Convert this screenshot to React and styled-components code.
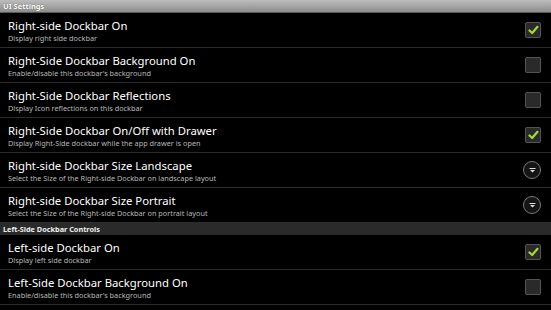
import React from 'react';
import styled, { createGlobalStyle } from 'styled-components';

const Global = createGlobalStyle`
  html, body {
    margin: 0;
    padding: 0;
    background: #000;
  }
  body {
    font-family: "Noto Sans", "Open Sans", sans-serif;
    color: #fff;
    width: 551px;
    height: 310px;
    overflow: hidden;
  }
`;

const Screen = styled.div`
  width: 551px;
  height: 310px;
  background: #000;
  display: flex;
  flex-direction: column;
`;

const TitleBar = styled.div`
  height: 13px;
  flex: none;
  box-sizing: border-box;
  background: linear-gradient(#bcbcbc, #8e8e8e);
  border-bottom: 1px solid #5a5a5a;
  display: flex;
  align-items: center;
  padding-left: 3px;
  font-size: 7.5px;
  font-weight: bold;
  color: #fff;
  text-shadow: 0 0 1px #444;
`;

const Category = styled.div`
  height: 12px;
  flex: none;
  background: #2a2a2a;
  display: flex;
  align-items: center;
  padding-left: 3px;
  font-size: 7.3px;
  font-weight: bold;
  color: #f0f0f0;
`;

const Row = styled.div`
  height: 34px;
  flex: none;
  display: flex;
  align-items: center;
  padding: 0 10px 0 8px;
  border-bottom: 1px solid #2c2c2c;
`;

const Texts = styled.div`
  flex: 1;
  display: flex;
  flex-direction: column;
  padding-top: 1px;
`;

const Title = styled.div`
  font-size: 11.3px;
  line-height: 14px;
  color: #fff;
`;

const Summary = styled.div`
  font-size: 7.3px;
  line-height: 10px;
  color: #b8b8b8;
`;

const Box = styled.div`
  width: 14px;
  height: 14px;
  border: 1px solid #555;
  border-radius: 2px;
  background: #2a2a2a;
  display: flex;
  align-items: center;
  justify-content: center;
`;

const Circle = styled.div`
  width: 16px;
  height: 16px;
  border: 1px solid #777;
  border-radius: 50%;
  background: #151515;
  display: flex;
  align-items: center;
  justify-content: center;
`;

const Check = ({ on }) => (
  <Box>
    {on && (
      <svg width="11" height="10" viewBox="0 0 11 10">
        <path d="M1.5 5.5 L4.2 8 L9.5 1.8" fill="none" stroke="#a6d83a" strokeWidth="2.2" strokeLinecap="round" strokeLinejoin="round" />
      </svg>
    )}
  </Box>
);

const Drop = () => (
  <Circle>
    <svg width="7" height="5" viewBox="0 0 7 5">
      <rect x="0.5" y="0" width="6" height="1" fill="#ddd" />
      <path d="M1 2 L6 2 L3.5 4.6 Z" fill="#ddd" />
    </svg>
  </Circle>
);

const Pref = ({ title, summary, widget }) => (
  <Row>
    <Texts>
      <Title>{title}</Title>
      <Summary>{summary}</Summary>
    </Texts>
    {widget}
  </Row>
);

const rightPrefs = [
  ['Right-side Dockbar On', 'Display right side dockbar', <Check on />],
  ['Right-Side Dockbar Background On', "Enable/disable this dockbar's background", <Check />],
  ['Right-Side Dockbar Reflections', 'Display Icon reflections on this dockbar', <Check />],
  ['Right-Side Dockbar On/Off with Drawer', 'Display Right-Side dockbar while the app drawer is open', <Check on />],
  ['Right-side Dockbar Size Landscape', 'Select the Size of the Right-side Dockbar on landscape layout', <Drop />],
  ['Right-side Dockbar Size Portrait', 'Select the Size of the Right-side Dockbar on portrait layout', <Drop />],
];

const leftPrefs = [
  ['Left-side Dockbar On', 'Display left side dockbar', <Check on />],
  ['Left-Side Dockbar Background On', "Enable/disable this dockbar's background", <Check />],
];

export default function App() {
  return (
    <Screen>
      <Global />
      <TitleBar>UI Settings</TitleBar>
      {rightPrefs.map(([t, s, w]) => <Pref key={t} title={t} summary={s} widget={w} />)}
      <Category>Left-Side Dockbar Controls</Category>
      {leftPrefs.map(([t, s, w]) => <Pref key={t} title={t} summary={s} widget={w} />)}
    </Screen>
  );
}
